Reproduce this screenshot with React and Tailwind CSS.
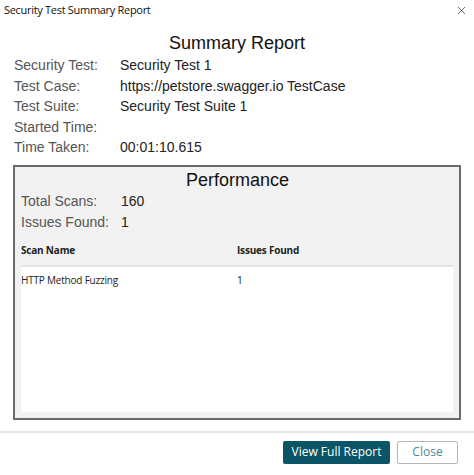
import { X } from "lucide-react";

const info = [
  ["Security Test:", "Security Test 1"],
  ["Test Case:", "https://petstore.swagger.io TestCase"],
  ["Test Suite:", "Security Test Suite 1"],
  ["Started Time:", ""],
  ["Time Taken:", "00:01:10.615"],
];

export default function App() {
  return (
    <div className="w-[474px] h-[475px] bg-white flex flex-col overflow-hidden font-['Liberation_Sans',Arial,sans-serif]">
      <div className="h-[21px] flex items-center justify-between pl-[4px] pr-[6px] font-['Open_Sans',sans-serif] text-[11px] text-[#111] tracking-[-0.3px]">
        <span>Security Test Summary Report</span>
        <X className="w-[13px] h-[13px] text-[#333]" strokeWidth={1.3} />
      </div>

      <h1 className="text-center text-[18px] leading-[22px] text-[#111] mt-[11px]">Summary Report</h1>

      <div className="flex flex-col pl-[14px] mt-[1px] text-[14px] leading-[20.6px]">
        {info.map(([k, v]) => (
          <div key={k} className="flex">
            <span className="w-[106px] text-[#555]">{k}</span>
            <span className="text-[#222]">{v}</span>
          </div>
        ))}
      </div>

      <div className="mx-[13px] mt-[7px] h-[255px] border-2 border-[#6b6b6b] bg-[#f2f2f2] flex flex-col pl-[6px] pr-[5px] pb-[6px]">
        <h2 className="text-center text-[18px] leading-[22px] text-[#111] mt-[2px]">Performance</h2>
        <div className="flex flex-col text-[14px] leading-[21px]">
          <div className="flex">
            <span className="w-[100px] text-[#555]">Total Scans:</span>
            <span className="text-[#222]">160</span>
          </div>
          <div className="flex">
            <span className="w-[100px] text-[#555]">Issues Found:</span>
            <span className="text-[#222]">1</span>
          </div>
        </div>
        <div className="flex-1 flex flex-col mt-[10px] font-['Open_Sans',sans-serif] text-[10px] text-[#222] tracking-[-0.2px]">
          <div className="flex font-bold h-[22px] items-start">
            <span className="w-[216px]">Scan Name</span>
            <span>Issues Found</span>
          </div>
          <div className="flex-1 bg-white border-t-2 border-[#e4e4e4] mr-[1px]">
            <div className="flex pt-[6px]">
              <span className="w-[216px]">HTTP Method Fuzzing</span>
              <span>1</span>
            </div>
          </div>
        </div>
      </div>

      <div className="mt-[11px] border-t-2 border-[#e6e6e6] flex justify-end gap-[7px] pt-[8px] pr-[16px] font-['Open_Sans',sans-serif] text-[12px]">
        <button className="w-[107px] h-[23px] bg-[#0b5566] text-white rounded-[2px]">View Full Report</button>
        <button className="w-[61px] h-[23px] bg-white border border-[#b5b5b5] text-[#4c8a99] rounded-[2px]">Close</button>
      </div>
    </div>
  );
}
